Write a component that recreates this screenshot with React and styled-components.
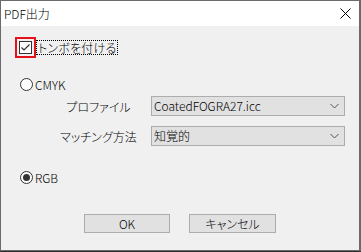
import React from "react";
import styled, { createGlobalStyle } from "styled-components";

const Global = createGlobalStyle`
  html, body { margin: 0; padding: 0; }
  body {
    background: #2b2b2b;
    font-family: "Noto Sans CJK JP", "Noto Sans", sans-serif;
    font-size: 12px;
    font-weight: 300;
    color: #000;
    width: 361px;
    height: 252px;
    overflow: hidden;
  }
`;

const Window = styled.div`
  box-sizing: border-box;
  width: 361px;
  height: 251px;
  border: 1px solid #6b6b6b;
  border-right-width: 2px;
  background: #f0f0f0;
  display: flex;
  flex-direction: column;
`;

const TitleBar = styled.div`
  height: 25px;
  background: #fff;
  display: flex;
  align-items: center;
  justify-content: space-between;
  padding: 0 8px 0 3px;
  font-size: 12px;
  line-height: 1;
`;

const TitleText = styled.span`
  font-feature-settings: "palt";
  margin-top: 1px;
`;

const Content = styled.div`
  flex: 1;
  display: flex;
  flex-direction: column;
  padding: 0 0 0 14px;
`;

const CheckRow = styled.div`
  margin-top: 11px;
  display: flex;
  align-items: center;
  height: 21px;
`;

const Highlight = styled.div`
  box-sizing: border-box;
  width: 21px;
  height: 21px;
  border: 2px solid #e5121c;
  display: flex;
  align-items: center;
  justify-content: center;
`;

const Box = styled.div`
  box-sizing: border-box;
  width: 13px;
  height: 13px;
  border: 1px solid #333;
  background: #fff;
  display: flex;
  align-items: center;
  justify-content: center;
`;

const FocusLabel = styled.span`
  padding: 0 1px;
  border: 1px dotted #000;
  height: 13px;
  line-height: 13px;
  font-feature-settings: "palt";
  letter-spacing: 0.2px;
`;

const RadioRow = styled.div`
  margin-top: ${(p) => p.$mt}px;
  margin-left: 5px;
  display: flex;
  align-items: center;
  height: 13px;
  gap: 2px;
`;

const RadioCircle = styled.div`
  box-sizing: border-box;
  width: 13px;
  height: 13px;
  border-radius: 50%;
  border: 1px solid #333;
  background: #fff;
  display: flex;
  align-items: center;
  justify-content: center;
`;

const Dot = styled.div`
  width: 7px;
  height: 7px;
  border-radius: 50%;
  background: #333;
`;

const RadioLabel = styled.span`
  line-height: 13px;
`;

const Form = styled.div`
  margin-top: 5px;
  margin-left: 41px;
  display: grid;
  grid-template-columns: 85px 194px;
  column-gap: 10px;
  row-gap: 10px;
  align-items: center;
`;

const FieldLabel = styled.span`
  text-align: center;
  font-feature-settings: "palt";
`;

const Select = styled.div`
  box-sizing: border-box;
  height: 20px;
  border: 1px solid #adadad;
  background: #e1e1e1;
  display: flex;
  align-items: center;
  justify-content: space-between;
  padding: 0 5px 0 2px;
  line-height: 1;
`;

const ButtonRow = styled.div`
  margin-top: 30px;
  margin-left: 69px;
  display: flex;
  gap: 19px;
`;

const Button = styled.div`
  box-sizing: border-box;
  width: ${(p) => p.$w}px;
  height: 19px;
  border: 1px solid #adadad;
  background: #e1e1e1;
  display: flex;
  align-items: center;
  justify-content: center;
  line-height: 1;
  font-feature-settings: "palt";
`;

const Chevron = () => (
  <svg width="9" height="6" viewBox="0 0 9 6">
    <path d="M0.5 1 L4.5 5 L8.5 1" fill="none" stroke="#555" strokeWidth="1" />
  </svg>
);

const Close = () => (
  <svg width="11" height="11" viewBox="0 0 11 11">
    <path d="M0.5 0.5 L10.5 10.5 M10.5 0.5 L0.5 10.5" stroke="#000" strokeWidth="1" />
  </svg>
);

const Check = () => (
  <svg width="11" height="11" viewBox="0 0 11 11">
    <path d="M1.5 5.5 L4 8 L9.5 2.5" fill="none" stroke="#333" strokeWidth="1.2" />
  </svg>
);

export default function App() {
  return (
    <>
      <Global />
      <Window>
        <TitleBar>
          <TitleText>PDF出力</TitleText>
          <Close />
        </TitleBar>
        <Content>
          <CheckRow>
            <Highlight>
              <Box>
                <Check />
              </Box>
            </Highlight>
            <FocusLabel>トンボを付ける</FocusLabel>
          </CheckRow>
          <RadioRow $mt={20}>
            <RadioCircle />
            <RadioLabel>CMYK</RadioLabel>
          </RadioRow>
          <Form>
            <FieldLabel>プロファイル</FieldLabel>
            <Select>
              <span>CoatedFOGRA27.icc</span>
              <Chevron />
            </Select>
            <FieldLabel>マッチング方法</FieldLabel>
            <Select>
              <span>知覚的</span>
              <Chevron />
            </Select>
          </Form>
          <RadioRow $mt={25}>
            <RadioCircle>
              <Dot />
            </RadioCircle>
            <RadioLabel>RGB</RadioLabel>
          </RadioRow>
          <ButtonRow>
            <Button $w={86}>OK</Button>
            <Button $w={87}>キャンセル</Button>
          </ButtonRow>
        </Content>
      </Window>
    </>
  );
}
